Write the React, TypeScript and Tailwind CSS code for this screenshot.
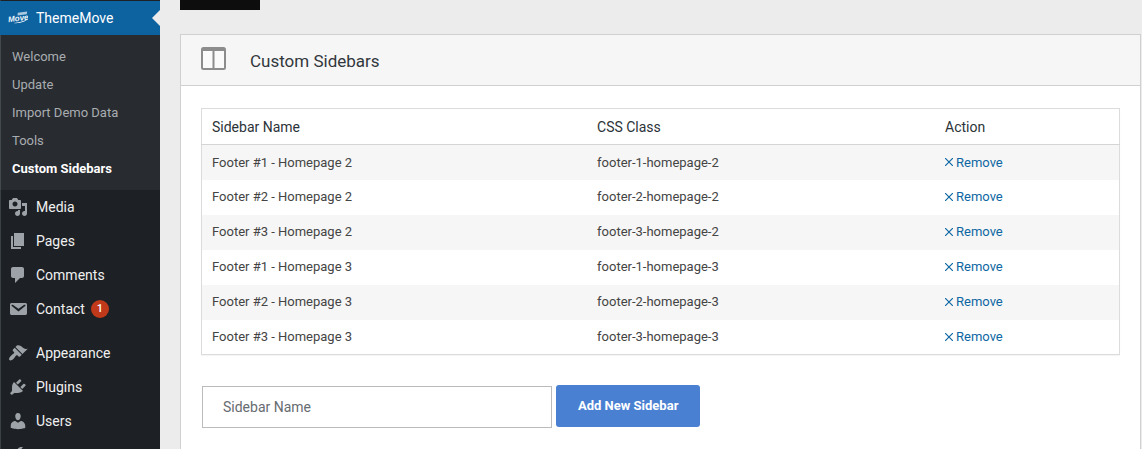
import React from "react";

const ICONS = {
  media:
    "M13 11V4c0-.55-.45-1-1-1h-1.67L9 1H5L3.67 3H2c-.55 0-1 .45-1 1v7c0 .55.45 1 1 1h10c.55 0 1-.45 1-1zM7 4.5c1.38 0 2.5 1.12 2.5 2.5S8.38 9.5 7 9.5 4.5 8.38 4.5 7 5.62 4.5 7 4.5zM14 6h5v10.5c0 1.38-1.12 2.5-2.5 2.5S14 17.88 14 16.5s1.12-2.5 2.5-2.5c.17 0 .34.02.5.05V9h-3V6zm-4 8.05V13h2v3.5c0 1.38-1.12 2.5-2.5 2.5S7 17.88 7 16.5 8.12 14 9.5 14c.17 0 .34.02.5.05z",
  pages: "M6 15V2h10v13H6zm-1 1h8v2H3V5h2v11z",
  comments:
    "M5 2h9c1.1 0 2 .9 2 2v7c0 1.1-.9 2-2 2h-2l-5 5v-5H5c-1.1 0-2-.9-2-2V4c0-1.1.9-2 2-2z",
  contact:
    "M3.87 4h13.25C18.37 4 19 4.59 19 5.79v8.42c0 1.19-.63 1.79-1.88 1.79H3.87c-1.25 0-1.88-.6-1.88-1.79V5.79c0-1.2.63-1.79 1.88-1.79zm6.62 8.6l6.74-5.53c.24-.2.43-.66.13-1.07-.29-.41-.82-.42-1.17-.17l-5.7 3.86L4.8 5.83c-.35-.25-.88-.24-1.17.17-.3.41-.11.87.13 1.07z",
  appearance:
    "M14.48 11.06L7.41 3.99l1.5-1.5c.5-.56 2.3-.47 3.51.32 1.21.8 1.43 1.28 2.91 2.1 1.18.64 2.45 1.26 4.45.85zm-.71.71L6.7 4.7 4.93 6.47c-.39.39-.39 1.02 0 1.41l1.06 1.06c.39.39.39 1.03 0 1.42-.6.6-1.43 1.11-2.21 1.69-.35.26-.7.53-1.01.84C1.43 14.23.4 16.08 1.4 17.07c.99 1 2.84-.03 4.18-1.36.31-.31.58-.66.85-1.02.57-.78 1.08-1.61 1.69-2.21.39-.39 1.02-.39 1.41 0l1.06 1.06c.39.39 1.02.39 1.41 0z",
  plugins:
    "M13.11 4.36L9.87 7.6 8 5.73l3.24-3.24c.35-.34 1.05-.2 1.56.32.52.51.66 1.21.31 1.55zm-8 1.77l.91-1.12 9.01 9.01-1.19.84c-.71.71-2.63 1.16-3.82 1.16H6.14L4.9 17.26c-.59.59-1.54.59-2.12 0-.59-.58-.59-1.53 0-2.12l1.24-1.24v-3.88c0-1.13.4-3.19 1.09-3.89zm7.26 3.97l3.24-3.24c.34-.35 1.04-.21 1.55.31.52.51.66 1.21.31 1.55l-3.24 3.25z",
  users:
    "M10 9.25c-2.27 0-2.73-3.44-2.73-3.44C7 4.02 7.82 2 9.97 2c2.16 0 2.98 2.02 2.71 3.81 0 0-.41 3.44-2.68 3.44zm0 2.57L12.72 10c2.39 0 4.52 2.33 4.52 4.53v2.49s-3.65 1.13-7.24 1.13c-3.65 0-7.24-1.13-7.24-1.13v-2.49c0-2.25 1.94-4.48 4.47-4.48z",
  tools:
    "M16.68 9.77c-1.34 1.34-3.3 1.67-4.95.99l-5.41 6.52c-.99.99-2.59.99-3.58 0s-.99-2.59 0-3.57l6.52-5.42c-.68-1.65-.35-3.61.99-4.95 1.28-1.28 3.12-1.62 4.72-1.06l-2.89 2.89 2.82 2.82 2.86-2.87c.53 1.58.18 3.39-1.08 4.65zM3.81 16.21c.4.39 1.04.39 1.43 0 .4-.4.4-1.04 0-1.43-.39-.4-1.03-.4-1.43 0-.39.39-.39 1.03 0 1.43z",
};

type IconName = keyof typeof ICONS;

function MenuLink({ icon, label, count }: { icon: IconName; label?: string; count?: number }) {
  return (
    <a
      href="#"
      aria-label={label ? undefined : icon}
      className="flex h-[34px] items-center gap-2 pl-2 text-sm text-[#f0f0f1]"
    >
      <svg viewBox="0 0 20 20" className="size-5 shrink-0 fill-[#9ca2a7]" aria-hidden="true">
        <path d={ICONS[icon]} />
      </svg>
      {label}
      {count !== undefined && (
        <span className="-ml-0.5 flex size-[18px] items-center justify-center rounded-full bg-[#c0391a] text-[11px] font-medium text-white">
          {count}
        </span>
      )}
    </a>
  );
}

function BrandMark() {
  return (
    <svg viewBox="0 0 20 20" className="size-5 shrink-0" aria-hidden="true">
      <g transform="rotate(-8 10 10)" fill="#eef5fa">
        <text x="0" y="13" fontSize="8" fontWeight="700" fontStyle="italic" fontFamily="Liberation Sans, sans-serif">
          Move
        </text>
        <path d="M10.5 4.8h9.500l-.8 2.600h-9.300z" fillOpacity=".7" />
        <path d="M5 14.300c4 .2 10.500-.2 14.500-2-3 2.800-10 3.400-14.500 2z" />
      </g>
    </svg>
  );
}

const SUBMENU = ["Welcome", "Update", "Import Demo Data", "Tools"];

const ROWS = [2, 3].flatMap((page) =>
  [1, 2, 3].map((n) => ({ name: `Footer #${n} - Homepage ${page}`, css: `footer-${n}-homepage-${page}` })),
);

function Sidebar() {
  return (
    <nav className="w-40 shrink-0 bg-[#1d2024] pt-px shadow-[inset_1px_0_0_#3a3f44]">
      <a href="#" className="relative flex h-[34px] items-center gap-2 bg-[#0d62a0] pl-2 text-sm text-white">
        <BrandMark />
        ThemeMove
        <span className="absolute top-1/2 right-0 -translate-y-1/2 border-8 border-transparent border-r-[#ececec]" />
      </a>
      <div className="bg-[#282b30] pt-2 pb-[7px] text-[13px] shadow-[inset_1px_0_0_#44494e]">
        {SUBMENU.map((item) => (
          <a key={item} href="#" className="flex h-7 items-center pl-3 text-[#a9adb1]">
            {item}
          </a>
        ))}
        <a href="#" aria-current="page" className="flex h-7 items-center pl-3 font-bold text-white">
          Custom Sidebars
        </a>
      </div>
      <MenuLink icon="media" label="Media" />
      <MenuLink icon="pages" label="Pages" />
      <MenuLink icon="comments" label="Comments" />
      <MenuLink icon="contact" label="Contact" count={1} />
      <div className="h-2.5" />
      <MenuLink icon="appearance" label="Appearance" />
      <MenuLink icon="plugins" label="Plugins" />
      <MenuLink icon="users" label="Users" />
      <MenuLink icon="tools" />
    </nav>
  );
}

export default function App() {
  return (
    <div className="flex h-screen overflow-hidden bg-[#ececec] font-['Roboto','Liberation_Sans',sans-serif]">
      <Sidebar />
      <main className="flex min-w-0 grow flex-col pr-px pl-5">
        <div className="h-2.5 w-20 shrink-0 bg-[#0d0d0d]" />
        <section className="mt-6 grow border border-b-0 border-[#d0d0d0] bg-white">
          <header className="flex h-[51px] items-center gap-6 border-b border-[#d0d0d0] bg-[#f6f6f6] px-5">
            <svg viewBox="0 0 25 23" className="mb-1 h-[23px] w-[25px]" aria-hidden="true">
              <rect x="1" y="1" width="23" height="21" rx="1.500" fill="#fafafa" stroke="#8c8c8c" strokeWidth="2" />
              <path d="M1 2.500h23" stroke="#8c8c8c" strokeWidth="3" />
              <path d="M12.500 3v19" stroke="#8c8c8c" strokeWidth="2" />
            </svg>
            <h1 className="pt-1 text-[17px] text-[#32373c]">Custom Sidebars</h1>
          </header>
          <div className="px-5 pt-[22px]">
            <table className="w-full table-fixed border border-[#dcdcdc] text-left text-[13px] text-[#444] shadow-[0_1px_1px_rgba(0,0,0,0.04)]">
              <thead>
                <tr className="h-9 border-b border-[#d5d5d5] text-sm text-[#2c3338]">
                  <th className="w-[42%] px-2.5 font-normal">Sidebar Name</th>
                  <th className="w-[348px] px-2.5 font-normal">CSS Class</th>
                  <th className="px-2.5 font-normal">Action</th>
                </tr>
              </thead>
              <tbody>
                {ROWS.map((row) => (
                  <tr key={row.css} className="h-[35px] odd:bg-[#f6f6f6]">
                    <td className="px-2.5">{row.name}</td>
                    <td className="px-2.5">{row.css}</td>
                    <td className="px-2.5">
                      <button type="button" className="flex items-center gap-[3px] text-[#0e67a3]">
                        <svg viewBox="0 0 8 8" className="size-2" stroke="currentColor" strokeWidth="1.2" aria-hidden="true">
                          <path d="M0 0l8 8M8 0 0 8" />
                        </svg>
                        Remove
                      </button>
                    </td>
                  </tr>
                ))}
              </tbody>
            </table>
            <form className="mt-[30px] flex gap-1 pl-px" onSubmit={(event) => event.preventDefault()}>
              <input
                type="text"
                aria-label="Sidebar Name"
                placeholder="Sidebar Name"
                className="mt-px h-[42px] w-[350px] border border-[#bbb] bg-white px-5 text-sm placeholder:text-[#666b70]"
              />
              <button type="submit" className="h-[42px] rounded-[3px] bg-[#4a80d2] px-[22px] text-[13px] font-bold text-white">
                Add New Sidebar
              </button>
            </form>
          </div>
        </section>
      </main>
    </div>
  );
}
